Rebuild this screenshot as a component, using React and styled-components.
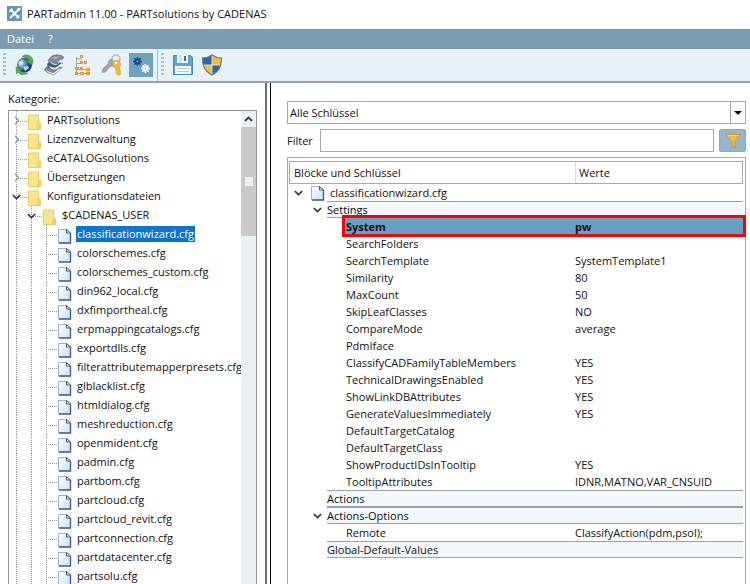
import React, { useState } from "react";
import styled, { createGlobalStyle, css } from "styled-components";

const GlobalStyle = createGlobalStyle`
  * {
    box-sizing: border-box;
  }

  body {
    margin: 0;
    background: #fff;
    color: #111;
    font-family: "Open Sans", "Noto Sans", sans-serif;
    font-size: 11px;
  }

  button, input, select {
    font: inherit;
    color: inherit;
    margin: 0;
    padding: 0;
    border: 0;
    background: none;
  }
`;

const categories = [
  { name: "PARTsolutions", level: 0, toggle: "closed" },
  { name: "Lizenzverwaltung", level: 0, toggle: "closed" },
  { name: "eCATALOGsolutions", level: 0 },
  { name: "Übersetzungen", level: 0, toggle: "closed" },
  { name: "Konfigurationsdateien", level: 0, toggle: "open" },
  { name: "$CADENAS_USER", level: 1, toggle: "open" },
  ...[
    "classificationwizard.cfg",
    "colorschemes.cfg",
    "colorschemes_custom.cfg",
    "din962_local.cfg",
    "dxfimportheal.cfg",
    "erpmappingcatalogs.cfg",
    "exportdlls.cfg",
    "filterattributemapperpresets.cfg",
    "glblacklist.cfg",
    "htmldialog.cfg",
    "meshreduction.cfg",
    "openmident.cfg",
    "padmin.cfg",
    "partbom.cfg",
    "partcloud.cfg",
    "partcloud_revit.cfg",
    "partconnection.cfg",
    "partdatacenter.cfg",
    "partsolu.cfg",
  ].map((name) => ({ name, level: 2 })),
];

const blocks = [
  {
    name: "Settings",
    open: true,
    keys: [
      ["System", "pw"],
      ["SearchFolders", ""],
      ["SearchTemplate", "SystemTemplate1"],
      ["Similarity", "80"],
      ["MaxCount", "50"],
      ["SkipLeafClasses", "NO"],
      ["CompareMode", "average"],
      ["PdmIface", ""],
      ["ClassifyCADFamilyTableMembers", "YES"],
      ["TechnicalDrawingsEnabled", "YES"],
      ["ShowLinkDBAttributes", "YES"],
      ["GenerateValuesImmediately", "YES"],
      ["DefaultTargetCatalog", ""],
      ["DefaultTargetClass", ""],
      ["ShowProductIDsInTooltip", "YES"],
      ["TooltipAttributes", "IDNR,MATNO,VAR_CNSUID"],
    ],
  },
  { name: "Actions", keys: [] },
  {
    name: "Actions-Options",
    open: true,
    keys: [["Remote", "ClassifyAction(pdm,psol);"]],
  },
  { name: "Global-Default-Values", keys: [] },
];

export default function App() {
  const [file, setFile] = useState("classificationwizard.cfg");
  const [filter, setFilter] = useState("");

  return (
    <Window>
      <GlobalStyle />
      <TitleBar>
        <AppIcon />
        <Title>PARTadmin 11.00 - PARTsolutions by CADENAS</Title>
      </TitleBar>
      <MenuBar>
        <MenuButton>Datei</MenuButton>
        <MenuButton>?</MenuButton>
      </MenuBar>
      <Toolbar>
        <ToolGroup>
          <Handle />
          <ToolButton aria-label="PARTsolutions"><GlobeIcon /></ToolButton>
          <ToolButton aria-label="Kataloge"><BooksIcon /></ToolButton>
          <ToolButton aria-label="Struktur"><StructureIcon /></ToolButton>
          <ToolButton aria-label="Lizenzen"><KeysIcon /></ToolButton>
          <ToolButton aria-label="Konfiguration" $active><GearsIcon /></ToolButton>
        </ToolGroup>
        <ToolGroup>
          <Handle />
          <ToolButton aria-label="Speichern"><SaveIcon /></ToolButton>
          <ToolButton aria-label="Administrator"><ShieldIcon /></ToolButton>
        </ToolGroup>
      </Toolbar>
      <Main>
        <CategoryPane>
          <PaneLabel id="category-label">Kategorie:</PaneLabel>
          <TreeBox>
            <Tree role="tree" aria-labelledby="category-label">
              {categories.map((item) => (
                <TreeRow
                  key={item.name}
                  role="treeitem"
                  aria-selected={item.name === file}
                  onClick={() => item.level === 2 && setFile(item.name)}
                >
                  {Array.from({ length: item.level }, (_, i) => (
                    <Guide key={i} />
                  ))}
                  <Branch>
                    {item.toggle && (
                      <Toggle aria-label={item.name}>
                        <Chevron open={item.toggle === "open"} />
                      </Toggle>
                    )}
                  </Branch>
                  {item.level === 2 ? <FileIcon /> : <FolderIcon />}
                  <TreeName $selected={item.name === file}>{item.name}</TreeName>
                </TreeRow>
              ))}
            </Tree>
            <ScrollTrack>
              <ScrollUp aria-label="Nach oben">
                <svg width="9" height="6" viewBox="0 0 9 6">
                  <path d="M1 5 4.500 1.500 8 5" fill="none" stroke="#444" strokeWidth="2" />
                </svg>
              </ScrollUp>
              <ScrollThumb>
                <ScrollGrip />
              </ScrollThumb>
            </ScrollTrack>
          </TreeBox>
        </CategoryPane>
        <Splitter />
        <KeysPane>
          <SelectBox>
            <Select aria-label="Schlüssel">
              <option>Alle Schlüssel</option>
            </Select>
            <SelectArrow>
              <svg width="8" height="4" viewBox="0 0 8 4">
                <path d="M0 0h8L4 4z" fill="#111" />
              </svg>
            </SelectArrow>
          </SelectBox>
          <FilterRow>
            <label htmlFor="filter">Filter</label>
            <FilterInput
              id="filter"
              value={filter}
              onChange={(e) => setFilter(e.target.value)}
            />
            <FilterButton aria-label="Filtern"><FunnelIcon /></FilterButton>
          </FilterRow>
          <TableBox>
            <KeyTable>
              <thead>
                <tr>
                  <HeadCell>Blöcke und Schlüssel</HeadCell>
                  <HeadCell $value>Werte</HeadCell>
                </tr>
              </thead>
              <tbody>
                <tr>
                  <Cell colSpan={2}>
                    <FileLine>
                      <Toggle aria-label={file}><Chevron open /></Toggle>
                      <FileIcon />
                      <span>{file}</span>
                    </FileLine>
                  </Cell>
                </tr>
                {blocks.map((block) => (
                  <Block key={block.name} block={block} />
                ))}
              </tbody>
            </KeyTable>
          </TableBox>
        </KeysPane>
      </Main>
    </Window>
  );
}

function Block({ block }) {
  return (
    <>
      <tr>
        <Cell colSpan={2}>
          <BlockLine>
            <BlockToggle>
              {block.open && (
                <Toggle aria-label={block.name}><Chevron open /></Toggle>
              )}
            </BlockToggle>
            <BlockName>{block.name}</BlockName>
          </BlockLine>
        </Cell>
      </tr>
      {block.keys.map(([name, value]) => {
        const marked = name === "System";
        return (
          <KeyRow key={name} $marked={marked}>
            <Cell>
              <KeyName $marked={marked}>{name}</KeyName>
              {marked && <Marker />}
            </Cell>
            <ValueCell $marked={marked}>{value}</ValueCell>
          </KeyRow>
        );
      })}
    </>
  );
}

function Chevron({ open }) {
  return open ? (
    <svg width="9" height="6" viewBox="0 0 9 6">
      <path d="M.8 1 4.500 4.600 8.200 1" fill="none" stroke="#333" strokeWidth="1.700" />
    </svg>
  ) : (
    <svg width="6" height="9" viewBox="0 0 6 9">
      <path d="M1 .8 4.600 4.500 1 8.200" fill="none" stroke="#999" strokeWidth="1.300" />
    </svg>
  );
}

function FolderIcon() {
  return (
    <NodeIcon viewBox="0 0 14 16">
      <path d="M.5 1h10v8h2v6.500H.5z" fill="#fde48d" stroke="#efc860" />
      <path d="M10 9h2.500v6.500H9z" fill="#f5ce60" />
    </NodeIcon>
  );
}

function FileIcon() {
  return (
    <NodeIcon viewBox="0 0 14 16">
      <defs>
        <linearGradient id="page" x1="0" y1="0" x2="1" y2="1">
          <stop offset="0" stopColor="#fff" />
          <stop offset="1" stopColor="#c9e0f3" />
        </linearGradient>
      </defs>
      <path d="M.5 1.500h8l4 3.500v10H.5z" fill="url(#page)" stroke="#a3b2c8" />
      <path d="M12.500 5v10H1" fill="none" stroke="#3e619c" strokeWidth="1.400" />
      <path d="M8.500 1.500V5h4z" fill="#fff" stroke="#35558c" />
    </NodeIcon>
  );
}

function AppIcon() {
  return (
    <svg width="15" height="15" viewBox="0 0 15 15">
      <path d="M0 0h15v15H0z" fill="#5d9ab9" />
      <path d="m4 4 7.500 7.500M11.500 3.500l-8 8" stroke="#fff" strokeWidth="1.800" strokeLinecap="round" />
      <path d="M2.200 4.500a2 2 0 0 0 2.500.3 2 2 0 0 0-.2-2.600" fill="none" stroke="#fff" strokeWidth="1.300" />
      <path d="m10.500 3 2-.8.500.5-.8 2M10.200 12.500a2 2 0 0 1 2.600-2.400" fill="none" stroke="#fff" strokeWidth="1.300" />
    </svg>
  );
}

function GlobeIcon() {
  return (
    <svg width="22" height="22" viewBox="0 0 22 22">
      <defs>
        <radialGradient id="globe" cx=".3" cy=".4">
          <stop offset="0" stopColor="#cfe6f8" />
          <stop offset=".5" stopColor="#5b93cc" />
          <stop offset="1" stopColor="#1c3f86" />
        </radialGradient>
      </defs>
      <circle cx="10.500" cy="11" r="7.500" fill="url(#globe)" />
      <path d="M5 8c2-2 4-2 4 0s-2 2-3 4zM9 13l5-1 1 2-4 3z" fill="#e9f3fb" opacity=".8" />
      <path d="M8 2.500C12-.5 17 1 18.500 5c.8 2 .5 4-.5 6l-6-4 2.500-.5C13 4 11 3 8 2.500z" fill="#56ab4c" stroke="#35803a" strokeWidth=".5" />
      <path d="M14 19c-4 2.500-8 2-10.500-1L2.500 20l-.5-7 6 2-2 1.500c2 2 5 2.500 8 2.500z" fill="#56ab4c" stroke="#35803a" strokeWidth=".5" />
    </svg>
  );
}

function BooksIcon() {
  return (
    <svg width="22" height="22" viewBox="0 0 22 22">
      <path d="M1 15.500 4 12l16 1-8 7.500c-4 .5-9-1.500-11-5z" fill="#7c8488" />
      <path d="M2.500 15.500c3 2.500 6 3.500 9 3l5-4.500v2l-5 4c-4 0-7-1.500-9-4.500z" fill="#eef0f1" />
      <path d="M4 10 7 7l13 2-7 7c-4 .5-8-1.500-9-6z" fill="#31617c" />
      <path d="M6 11.500c2 2 4 2.500 7 2l6-4.500v2l-6 4.500c-3 .5-6-.5-7-4z" fill="#fff" />
      <path d="M5 6.500C7 3 10 1 12 1c3-.5 7 0 9 2.500L14 11c-4 0-7-1.500-9-4.500z" fill="#858d91" stroke="#5c6569" strokeWidth=".5" />
      <path d="M7 7.500c2 1.500 4 2 6.500 1.500l5-4v2l-5 4c-3 0-5-1-6.500-3.500z" fill="#dce6eb" />
      <path d="M9 4.500 12 2.500l4 .5-3 2z" fill="#b4babd" />
      <path d="m9 9 5 1.500 2-2-5-1z" fill="#4e8db2" />
    </svg>
  );
}

function StructureIcon() {
  return (
    <svg width="22" height="22" viewBox="0 0 22 22">
      <path d="M4.500 3v16M5 5h5M5 9.500h5M5 15.500h10M5 19.500h10" fill="none" stroke="#a9a28c" />
      <g fill="#ef9528">
        <path d="M8 1h3v3H8zM8 7h3v3H8zM12 7h3v3h-3zM3 13h4v3H3zM8 13h3v3H8zM3 18h3v3H3zM8 18h4v3H8zM14 14h4v3h-4zM14 18h4v3h-4z" />
      </g>
      <path d="M9 2h1v1H9zM13 8h1v1h-1zM4 14h1v1H4zM15 15h1v1h-1zM9 19h1v1H9z" fill="#ffd28d" />
    </svg>
  );
}

function KeysIcon() {
  return (
    <svg width="22" height="22" viewBox="0 0 22 22">
      <circle cx="15" cy="5" r="4" fill="none" stroke="#b3b9bc" strokeWidth="1.500" />
      <path d="m10 5 3.500 3.500-1.500 3.500-3 .5L4.500 18 1 18.500l1-4 5-4.500.5-3z" fill="#a3a3a3" stroke="#868787" strokeWidth=".5" />
      <path d="m12 7 5-1 3 4-1.500 3.500L20 20l-2 1.500-2-1-1-2 .5-1.500-1-1 .5-1.500-3-1.500z" fill="#f0b83d" stroke="#cf9a2a" strokeWidth=".5" />
      <circle cx="15" cy="9" r="1.200" fill="#fff" />
    </svg>
  );
}

function GearsIcon() {
  return (
    <svg width="22" height="22" viewBox="0 0 22 22">
      <g stroke="#174d70" strokeWidth="1.300">
        <path d="M7.500 3v9M3 7.500h9M4.300 4.300l6.400 6.400M10.700 4.300l-6.400 6.400" />
        <circle cx="7.500" cy="7.500" r="2.500" fill="#174d70" />
      </g>
      <circle cx="7.500" cy="7.500" r="1" fill="#6ba3c1" />
      <g stroke="#fff" strokeWidth="1.700">
        <path d="M15.500 10v9M11 14.500h9M12.300 11.300l6.400 6.400M18.700 11.300l-6.400 6.400" />
        <circle cx="15.500" cy="14.500" r="2" fill="#fff" />
      </g>
      <circle cx="15.500" cy="14.500" r=".9" fill="#9fc3d6" />
    </svg>
  );
}

function SaveIcon() {
  return (
    <svg width="22" height="22" viewBox="0 0 22 22">
      <path d="M1.500 1.500h17l2 2v17h-19z" fill="#5aa9cb" stroke="#4291b5" />
      <path d="M5 1h11v8H5z" fill="#edf5f9" />
      <path d="M7 1h3v8H7z" fill="#cfe2ec" />
      <path d="M12 2h2v5h-2z" fill="#2f7797" />
      <path d="M3 12h16v8H3z" fill="#f7fbfd" />
      <path d="M5 14.500h12M5 17.500h12" stroke="#b8c7d0" />
    </svg>
  );
}

function ShieldIcon() {
  return (
    <svg width="22" height="22" viewBox="0 0 22 22">
      <defs>
        <clipPath id="shield">
          <path d="M11 1c3 2 6 3 9.500 3 0 8-2 13-9.500 17C3.500 17 1.500 12 1.500 4 5 4 8 3 11 1z" />
        </clipPath>
      </defs>
      <g clipPath="url(#shield)">
        <path d="M0 0h11v11H0zM11 11h11v11H11z" fill="#2468b8" />
        <path d="M11 0h11v11H11zM0 11h11v11H0z" fill="#f3bd3c" />
        <path d="M11 0v22M0 11h22" stroke="#f4ead0" strokeWidth=".8" />
      </g>
      <path d="M11 1c3 2 6 3 9.500 3 0 8-2 13-9.500 17C3.500 17 1.500 12 1.500 4 5 4 8 3 11 1z" fill="none" stroke="#77736a" strokeWidth="1.200" />
    </svg>
  );
}

function FunnelIcon() {
  return (
    <svg width="16" height="16" viewBox="0 0 16 16">
      <path d="M.5 1.500h15L10 8v6.500l-3-2V8z" fill="#f8bd2c" stroke="#dc921c" />
      <path d="M2.500 2.500h11" stroke="#fbe08a" />
    </svg>
  );
}

const dots = css`
  repeating-linear-gradient(#9a9a9a 0 1px, transparent 1px 2px) 7px 0 / 1px 100% no-repeat
`;

const Window = styled.div`
  display: flex;
  flex-direction: column;
  height: 100vh;
  overflow: hidden;
`;

const TitleBar = styled.header`
  display: flex;
  flex: none;
  align-items: center;
  gap: 5px;
  height: 29px;
  padding: 0 0 2px 7px;
`;

const Title = styled.h1`
  margin: 0;
  font-size: 11px;
  font-weight: 400;
`;

const MenuBar = styled.nav`
  display: flex;
  flex: none;
  gap: 14px;
  height: 20px;
  padding: 0 0 2px 7px;
  background: #7b9db3;
`;

const MenuButton = styled.button`
  color: #fff;
`;

const Toolbar = styled.div`
  display: flex;
  flex: none;
  height: 34px;
  background: #e6f1f8;
  border-bottom: 2px solid #9ba1a8;
`;

const ToolGroup = styled.div`
  display: flex;
  align-items: center;
  gap: 5px;
  padding: 0 4px 0 3px;

  & + & {
    border-left: 1px solid #b5bdc3;
  }
`;

const Handle = styled.span`
  width: 3px;
  height: 24px;
  margin-right: 2px;
  background: repeating-linear-gradient(#b3bcc3 0 2px, transparent 2px 4px);
`;

const ToolButton = styled.button`
  display: flex;
  align-items: center;
  justify-content: center;
  width: 24px;
  height: 24px;
  background: ${({ $active }) => ($active ? "#6ba3c1" : "transparent")};
`;

const Main = styled.main`
  display: flex;
  flex: 1;
  min-height: 0;
`;

const CategoryPane = styled.section`
  display: flex;
  flex-direction: column;
  flex: 0 0 265px;
  min-width: 0;
  padding: 8px 8px 0;
`;

const PaneLabel = styled.h2`
  flex: none;
  margin: 0 0 3px;
  font-size: 11px;
  font-weight: 400;
  line-height: 16px;
`;

const TreeBox = styled.div`
  display: flex;
  flex: 1;
  min-height: 0;
  border: 1px solid #8e949a;
  border-bottom: 0;
`;

const Tree = styled.ul`
  flex: 1;
  min-width: 0;
  margin: 0;
  padding: 0;
  list-style: none;
  overflow: hidden;
`;

const TreeRow = styled.li`
  display: flex;
  height: 19px;
  white-space: nowrap;
  cursor: default;
`;

const Guide = styled.span`
  flex: none;
  width: 15px;
  background: ${dots};
`;

const Branch = styled(Guide)`
  display: flex;
  align-items: center;
  width: 19px;
  background:
    ${dots},
    repeating-linear-gradient(90deg, #9a9a9a 0 1px, transparent 1px 2px) 9px 10px / 9px 1px no-repeat;
`;

const Toggle = styled.button`
  display: flex;
  align-items: center;
  justify-content: center;
  flex: none;
  width: 15px;
  height: 15px;
`;

const NodeIcon = styled.svg`
  flex: none;
  align-self: flex-end;
  width: 14px;
  height: 16px;
`;

const TreeName = styled.span`
  height: 16px;
  margin: 1px 0 0 4px;
  padding: 0 1px;
  line-height: 15px;
  color: ${({ $selected }) => ($selected ? "#fff" : "inherit")};
  background: ${({ $selected }) => ($selected ? "#0a74d2" : "transparent")};
`;

const ScrollTrack = styled.div`
  flex: none;
  width: 15px;
  background: #eaf0f4;
`;

const ScrollUp = styled.button`
  display: flex;
  align-items: center;
  justify-content: center;
  width: 15px;
  height: 16px;
`;

const ScrollThumb = styled.div`
  display: flex;
  align-items: center;
  justify-content: center;
  height: 109px;
  background: #cacacc;
`;

const ScrollGrip = styled.span`
  width: 8px;
  height: 9px;
  background: #eef0f0;
`;

const Splitter = styled.div`
  flex: none;
  width: 6px;
  border-left: 2px solid #6d6d70;
  border-right: 1px solid #000;
`;

const KeysPane = styled.section`
  display: flex;
  flex-direction: column;
  flex: 1;
  min-width: 0;
  gap: 5px;
  padding: 18px 4px 0 16px;
`;

const SelectBox = styled.div`
  position: relative;
  flex: none;
  height: 23px;
`;

const Select = styled.select`
  width: 100%;
  height: 100%;
  padding: 0 20px 0 2px;
  border: 1px solid #a8a8a8;
  background: #fff;
  appearance: none;
`;

const SelectArrow = styled.span`
  position: absolute;
  top: 1px;
  right: 1px;
  bottom: 1px;
  display: flex;
  align-items: center;
  justify-content: center;
  width: 15px;
  border-left: 1px solid #a8a8a8;
  pointer-events: none;
`;

const FilterRow = styled.div`
  display: grid;
  grid-template-columns: 28px 1fr 27px;
  align-items: center;
  gap: 5px;
  height: 23px;
`;

const FilterInput = styled.input`
  width: 100%;
  height: 23px;
  padding: 0 4px;
  border: 1px solid #a8a8a8;
  background: #fff;
`;

const FilterButton = styled.button`
  display: flex;
  align-items: center;
  justify-content: center;
  height: 23px;
  border: 1px solid #86a9c2;
  border-radius: 2px;
  background: #93b5cd;
`;

const TableBox = styled.div`
  flex: 1;
  min-height: 0;
  padding: 3px 2px 0 1px;
  border: 1px solid #a8a8a8;
  border-bottom: 0;
`;

const KeyTable = styled.table`
  width: 100%;
  table-layout: fixed;
  border-collapse: separate;
  border-spacing: 0;
`;

const HeadCell = styled.th`
  width: ${({ $value }) => ($value ? "37%" : "63%")};
  height: 23px;
  padding: 0 4px;
  border: solid #a8a8a8;
  border-width: ${({ $value }) => ($value ? "1px 1px 1px 0" : "1px 0 1px 1px")};
  ${({ $value }) => $value && "box-shadow: inset 1px 0 #dcdcdc;"}
  font-weight: 400;
  text-align: left;
`;

const Cell = styled.td`
  height: 17px;
  padding: 0;
  line-height: 17px;
  white-space: nowrap;
`;

const FileLine = styled.div`
  display: flex;
  align-items: center;
  gap: 5px;
  height: 17px;
  padding-left: 2px;
`;

const BlockLine = styled.div`
  display: flex;
  height: 17px;
  padding-left: 21px;
`;

const BlockToggle = styled.span`
  display: flex;
  align-items: center;
  flex: none;
  width: 17px;
`;

const BlockName = styled.div`
  flex: 1;
  line-height: 15px;
  border: solid #9da0a3;
  border-width: 1px 0;
  background: #f1f7fb;
`;

const KeyRow = styled.tr`
  position: relative;
  font-weight: ${({ $marked }) => ($marked ? 700 : 400)};
`;

const KeyName = styled.div`
  margin-left: 55px;
  padding-left: 2px;
  background: ${({ $marked }) => ($marked ? "#67a0c0" : "transparent")};
`;

const ValueCell = styled(Cell)`
  background: ${({ $marked }) => ($marked ? "#67a0c0" : "transparent")};
`;

const Marker = styled.span`
  position: absolute;
  top: -3px;
  right: -3px;
  bottom: -2px;
  left: 53px;
  border: 3px solid #fb0007;
  pointer-events: none;
`;
